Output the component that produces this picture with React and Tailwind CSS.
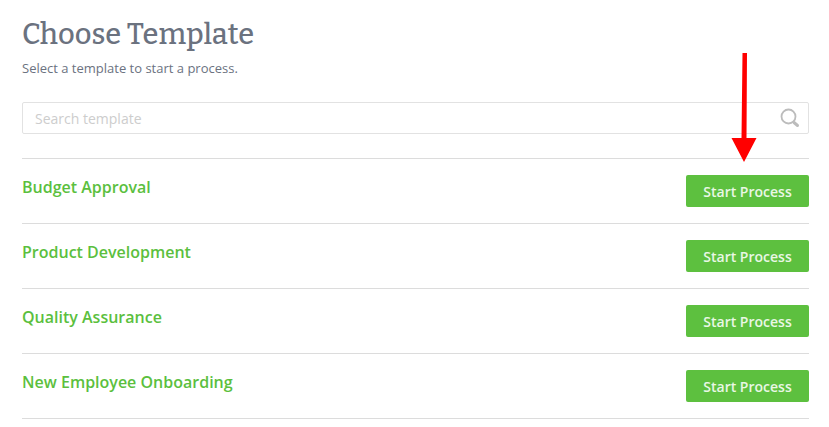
import React, { useState } from "react";

const templates = [
  { id: 1, name: "Budget Approval" },
  { id: 2, name: "Product Development" },
  { id: 3, name: "Quality Assurance" },
  { id: 4, name: "New Employee Onboarding" },
];

const SearchIcon = () => (
  <svg
    className="h-5 w-5"
    viewBox="0 0 20 20"
    fill="none"
    stroke="#bcbcbc"
    aria-hidden="true"
  >
    <circle cx="8.5" cy="8.5" r="7" strokeWidth="1.8" />
    <path d="M14 14.5l3.5 3" strokeWidth="3" strokeLinecap="round" />
  </svg>
);

const PointerArrow = () => (
  <svg
    className="pointer-events-none absolute right-[52px] bottom-full -mb-1 h-[110px] w-[26px]"
    viewBox="0 0 26 110"
    fill="#ff0000"
    aria-hidden="true"
  >
    <path d="M11.5 1h4.5l-.5 85h10L13 110 .5 86H10.5z" />
  </svg>
);

const TemplateRow = ({ template }) => (
  <li className="flex items-start justify-between border-b border-[#dcdcdc] py-4">
    <a
      href="#"
      className="text-base leading-6 font-semibold text-[#5bbf3e] hover:underline"
    >
      {template.name}
    </a>
    <button
      type="button"
      className="h-8 min-w-[123px] rounded-xs bg-[#5dc03f] px-4 pt-0.5 text-sm font-semibold text-[#e9f7e5] hover:bg-[#52ad37]"
    >
      Start Process
    </button>
  </li>
);

const App = () => {
  const [query, setQuery] = useState("");

  const visibleTemplates = templates.filter((template) =>
    template.name.toLowerCase().includes(query.trim().toLowerCase())
  );

  return (
    <main className="bg-white pt-4 pr-5 pb-2 pl-[22px] font-['Open_Sans',sans-serif] text-[#6b727f]">
      <h1 className="font-['Bitter','DejaVu_Serif',serif] text-[29px] leading-[38px] font-medium">
        Choose Template
      </h1>
      <p className="mt-1.5 text-[13px] leading-4">
        Select a template to start a process.
      </p>

      <div className="mt-[26px] flex h-8 items-center rounded-xs border border-[#e2e2e2] pr-2 pl-3">
        <input
          type="search"
          aria-label="Search template"
          placeholder="Search template"
          value={query}
          onChange={(e) => setQuery(e.target.value)}
          className="min-w-0 flex-1 pt-0.5 text-sm outline-none placeholder:text-[#cdcdcd]"
        />
        <SearchIcon />
      </div>

      <div className="relative mt-6">
        <ul className="border-t border-[#dcdcdc]">
          {visibleTemplates.map((template) => (
            <TemplateRow key={template.id} template={template} />
          ))}
        </ul>
        <PointerArrow />
      </div>
    </main>
  );
};

export default App;
